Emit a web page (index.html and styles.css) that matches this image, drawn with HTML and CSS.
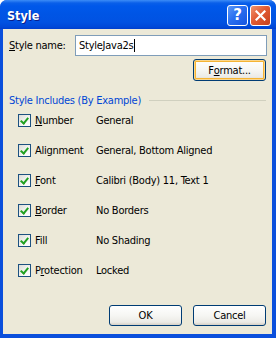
FILE: index.html
```html
<!DOCTYPE html>
<html>
<head>
<meta charset="utf-8">
<link rel="stylesheet" href="styles.css">
</head>
<body>
<div class="window">
  <div class="titlebar">
    <span class="title">Style</span>
    <div class="tb-buttons">
      <div class="tb-btn help">?</div>
      <div class="tb-btn close">
        <svg width="11" height="11" viewBox="0 0 11 11"><path d="M1.5 1.5 L9.5 9.5 M9.5 1.5 L1.5 9.5" stroke="#fff" stroke-width="2.2" stroke-linecap="square"/></svg>
      </div>
    </div>
  </div>
  <div class="client">
    <div class="name-row">
      <span class="name-label"><u>S</u>tyle name:</span>
      <div class="textbox">StyleJava2s<span class="caret"></span></div>
    </div>
    <div class="format-row">
      <div class="btn default">F<u>o</u>rmat...</div>
    </div>
    <div class="group-head">
      <span class="group-title">Style Includes (By Example)</span>
      <span class="group-line"></span>
    </div>
    <div class="rows">
      <div class="row"><span class="cb"></span><span class="lbl"><u>N</u>umber</span><span class="val">General</span></div>
      <div class="row"><span class="cb"></span><span class="lbl">Alignment</span><span class="val">General, Bottom Aligned</span></div>
      <div class="row"><span class="cb"></span><span class="lbl"><u>F</u>ont</span><span class="val">Calibri (Body) 11, Text 1</span></div>
      <div class="row"><span class="cb"></span><span class="lbl"><u>B</u>order</span><span class="val">No Borders</span></div>
      <div class="row"><span class="cb"></span><span class="lbl">Fill</span><span class="val">No Shading</span></div>
      <div class="row"><span class="cb"></span><span class="lbl">P<u>r</u>otection</span><span class="val">Locked</span></div>
    </div>
    <div class="actions">
      <div class="btn">OK</div>
      <div class="btn">Cancel</div>
    </div>
  </div>
</div>
</body>
</html>
```
FILE: styles.css
```css
html, body {
  margin: 0;
  padding: 0;
  background: #fff;
}
.window {
  width: 276px;
  height: 338px;
  display: flex;
  flex-direction: column;
  background: #0a4fdc;
  border-radius: 7px 7px 0 0;
  overflow: hidden;
  font-family: "DejaVu Sans Condensed", "Liberation Sans", sans-serif;
  font-stretch: condensed;
  font-size: 11px;
  letter-spacing: -0.25px;
  color: #000;
}
.titlebar {
  height: 29px;
  flex: none;
  display: flex;
  align-items: center;
  justify-content: space-between;
  padding: 0 5px 0 7px;
  background: linear-gradient(#3c8cf7 0px, #0a5fe9 3px, #0058ea 6px, #0055e5 14px, #0152e2 22px, #0048d8 27px, #003ecd 29px);
}
.title {
  font-family: "DejaVu Sans Condensed", "DejaVu Sans", sans-serif;
  font-weight: bold;
  font-size: 12.5px;
  letter-spacing: 0;
  color: #fff;
  text-shadow: 1px 1px 0 #0a1e8a;
  margin-top: 1px;
}
.tb-buttons {
  display: flex;
  gap: 2px;
  margin-top: 1px;
}
.tb-btn {
  width: 19px;
  height: 19px;
  border: 1px solid #fff;
  border-radius: 3px;
  display: flex;
  align-items: center;
  justify-content: center;
}
.help {
  background: linear-gradient(135deg, #5b98f8 0%, #2a6ff0 45%, #1654e0 100%);
  color: #fff;
  font-family: "DejaVu Sans", sans-serif;
  font-stretch: normal;
  font-weight: bold;
  font-size: 15px;
  letter-spacing: 0;
}
.close {
  background: linear-gradient(135deg, #f0946e 0%, #e15b34 45%, #c8401c 100%);
}
.client {
  flex: 1;
  margin: 0 4px 4px 3px;
  background: #ece9d8;
  display: flex;
  flex-direction: column;
  padding: 6px 5px 8px 6px;
}
.name-row {
  display: flex;
  align-items: center;
  height: 21px;
}
.name-label {
  width: 66px;
}
.textbox {
  flex: 1;
  height: 21px;
  box-sizing: border-box;
  border: 1px solid #7f9db9;
  background: #fff;
  display: flex;
  align-items: center;
  padding-left: 3px;
}
.caret {
  display: inline-block;
  width: 1px;
  height: 13px;
  background: #000;
  margin-left: 1px;
}
.format-row {
  display: flex;
  justify-content: flex-end;
  margin-top: 3px;
  padding-right: 1px;
}
.btn {
  width: 73px;
  height: 22px;
  box-sizing: border-box;
  border: 1px solid #003c74;
  border-radius: 3px;
  background: linear-gradient(#ffffff 0%, #f6f6f3 50%, #ecebe6 85%, #d6d0c5 100%);
  display: flex;
  align-items: center;
  justify-content: center;
}
.btn.default {
  box-shadow: inset 0 0 0 1px #fbd68c, inset 0 0 0 2px #f5b434;
}
.group-head {
  display: flex;
  align-items: center;
  margin-top: 13px;
  height: 13px;
  padding-right: 1px;
}
.group-title {
  color: #0046d5;
  white-space: nowrap;
}
.group-line {
  flex: 1;
  height: 1px;
  background: #d0d0bf;
  margin-left: 8px;
}
.rows {
  display: flex;
  flex-direction: column;
  gap: 17px;
  margin-top: 7px;
  padding-left: 9px;
}
.row {
  display: flex;
  align-items: center;
  height: 13px;
}
.cb {
  width: 13px;
  height: 13px;
  box-sizing: border-box;
  border: 1px solid #1c5180;
  background: linear-gradient(135deg, #dcdcd7 0%, #f6f6f4 60%, #ffffff 100%);
  position: relative;
  flex: none;
}
.cb::after {
  content: "";
  position: absolute;
  left: 3px;
  top: 1px;
  width: 3px;
  height: 6px;
  border: solid #21a121;
  border-width: 0 2px 2px 0;
  transform: rotate(40deg);
}
.lbl {
  width: 61px;
  margin-left: 4px;
}
.actions {
  margin-top: auto;
  display: flex;
  justify-content: flex-end;
  gap: 11px;
  padding-right: 1px;
}
.actions .btn {
  height: 21px;
}
```
